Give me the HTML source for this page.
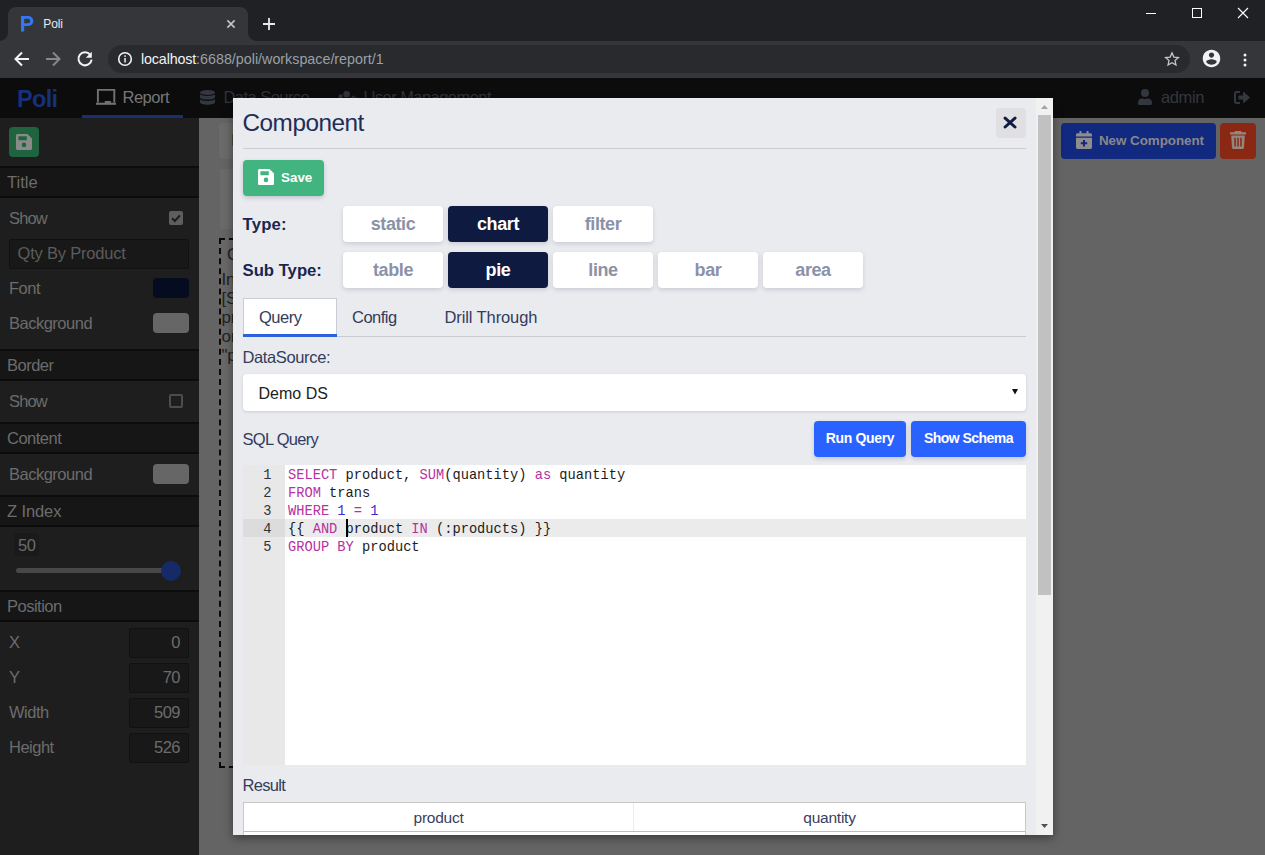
<!DOCTYPE html>
<html>
<head>
<meta charset="utf-8">
<title>Poli</title>
<style>
*{box-sizing:border-box;margin:0;padding:0}
html,body{width:1265px;height:855px;overflow:hidden;background:#666;font-family:"Liberation Sans",sans-serif;}
.abs{position:absolute}
#root{position:relative;width:1265px;height:855px;overflow:hidden;background:#656565}
/* ---------- browser chrome ---------- */
#tabstrip{left:0;top:0;width:1265px;height:41px;background:#202124}
#tab{left:7.5px;top:7px;width:240px;height:34px;background:#35363a;border-radius:8px 8px 0 0}
#toolbar{left:0;top:41px;width:1265px;height:37px;background:#35363a}
#omni{left:108px;top:45px;width:1082px;height:28px;border-radius:14px;background:#282a2d}
.t{position:absolute;white-space:nowrap;line-height:1}
/* ---------- app ---------- */
#nav{left:0;top:78px;width:1265px;height:40px;background:#0c0c0c}
#side{left:0;top:118px;width:199px;height:737px;background:#1e1e1e}
.sech{position:absolute;left:0;width:199px;height:32px;background:#161616;border-top:2px solid #0c0c0c;border-bottom:2px solid #0c0c0c}
.lbl{position:absolute;color:#6c6c6c;font-size:16.5px;letter-spacing:-0.5px;white-space:nowrap;line-height:1}
.inp{position:absolute;background:#181818;border:1px solid #111;border-radius:2px}
/* ---------- modal ---------- */
#modal{left:233px;top:98px;width:820px;height:737px;background:#eaebef;overflow:hidden;box-shadow:0 3px 9px rgba(0,0,0,.42)}
.btn{position:absolute;background:#fff;border-radius:4px;box-shadow:0 2px 4px rgba(60,70,100,.18);color:#8b92a8;font-weight:bold;font-size:18px;letter-spacing:-0.4px;text-align:center;line-height:36.4px;height:36px;width:100px}
.btn.on{background:#0e1a40;color:#fff}
.h{position:absolute;color:#1a2650;white-space:nowrap;line-height:1}

.tb{font-size:16.5px;letter-spacing:-0.5px;color:#323c5c}
.bb{background:#2a62ff;border-radius:4px;color:#fff;font-weight:bold;font-size:14px;letter-spacing:-0.35px;text-align:center;line-height:34px;box-shadow:0 2px 4px rgba(60,70,100,.22);white-space:nowrap}
.code{font-family:"Liberation Mono",monospace;font-size:15px;line-height:18px;white-space:pre;transform-origin:0 0;transform:scaleX(0.9133)}
.k{color:#b730a2}.n{color:#3e2ad0}
.rs{text-align:center;font-size:15.5px;color:#3a4060;letter-spacing:-0.25px}
</style>
</head>
<body>
<div id="root">
<!-- CHROME -->
<div id="tabstrip" class="abs"></div>
<div id="tab" class="abs"></div>
<div class="abs" style="left:-0.5px;top:33px;width:8px;height:8px;background:radial-gradient(circle at 0 0,#202124 7.5px,#35363a 8px)"></div>
<div class="abs" style="left:247.5px;top:33px;width:8px;height:8px;background:radial-gradient(circle at 100% 0,#202124 7.5px,#35363a 8px)"></div>
<div id="toolbar" class="abs"></div>
<div id="omni" class="abs"></div>
<svg class="abs" style="left:20.8px;top:16.2px" width="13" height="16" viewBox="0 0 13 16"><path fill="#3577f2" fill-rule="evenodd" d="M0 0H7.3A5 5 0 0 1 7.3 10H3.2V15.4H0zM3.2 2.8V7.2H7A2.2 2.2 0 0 0 7 2.8z"/></svg>
<div class="t" style="left:43.3px;top:18px;font-size:12px;color:#e8eaed;letter-spacing:-0.15px">Poli</div>
<svg class="abs" style="left:226px;top:19px" width="10" height="10" viewBox="0 0 10 10"><path d="M1.4 1.4L8.6 8.6M8.6 1.4L1.4 8.6" stroke="#c4c7cb" stroke-width="1.5" fill="none"/></svg>
<svg class="abs" style="left:262px;top:17px" width="14" height="14" viewBox="0 0 14 14"><path d="M7 1V13M1 7H13" stroke="#e8eaed" stroke-width="1.8" fill="none"/></svg>
<!-- window controls -->
<svg class="abs" style="left:1145px;top:8px" width="12" height="12" viewBox="0 0 12 12"><path d="M1 5.5H11" stroke="#fff" stroke-width="1" fill="none"/></svg>
<svg class="abs" style="left:1191px;top:7px" width="12" height="12" viewBox="0 0 12 12"><rect x="1.5" y="1.5" width="9" height="9" stroke="#fff" stroke-width="1" fill="none"/></svg>
<svg class="abs" style="left:1237px;top:7px" width="12" height="12" viewBox="0 0 12 12"><path d="M1 1L11 11M11 1L1 11" stroke="#fff" stroke-width="1.1" fill="none"/></svg>
<!-- nav buttons -->
<svg class="abs" style="left:13.5px;top:51px" width="16" height="16" viewBox="0 0 16 16"><path d="M15 8H2.5M8 1.5L1.5 8L8 14.5" stroke="#f1f3f4" stroke-width="2" fill="none"/></svg>
<svg class="abs" style="left:45px;top:51px" width="16" height="16" viewBox="0 0 16 16"><path d="M1 8H13.5M8 1.5L14.5 8L8 14.5" stroke="#85888c" stroke-width="2" fill="none"/></svg>
<svg class="abs" style="left:76px;top:50px" width="18" height="18" viewBox="0 0 18 18"><path d="M14.2 4.6A6.6 6.6 0 1 0 15.6 9.6" stroke="#f1f3f4" stroke-width="2" fill="none"/><path d="M15.8 1.8V7.8H9.8Z" fill="#f1f3f4"/></svg>
<svg class="abs" style="left:117px;top:51px" width="16" height="16" viewBox="0 0 16 16"><circle cx="8" cy="8" r="6.3" stroke="#f1f3f4" stroke-width="1.6" fill="none"/><rect x="7.3" y="7" width="1.5" height="4.5" fill="#f1f3f4"/><rect x="7.3" y="4.3" width="1.5" height="1.6" fill="#f1f3f4"/></svg>
<div class="t" style="left:141px;top:52px;font-size:14.3px;color:#9aa0a6"><span style="color:#f1f3f4;letter-spacing:-0.15px">localhost</span>:6688/poli/workspace/report/1</div>
<svg class="abs" style="left:1163px;top:50px" width="18" height="18" viewBox="0 0 24 24"><path d="M12 3.8l2.5 5.6 6.1.6-4.6 4.1 1.3 6-5.3-3.1-5.3 3.1 1.3-6-4.6-4.1 6.1-.6z" stroke="#c4c7cb" stroke-width="1.7" fill="none" stroke-linejoin="miter"/></svg>
<svg class="abs" style="left:1201.2px;top:48.1px" width="21" height="21" viewBox="0 0 24 24"><path fill="#f1f3f4" d="M12 2C6.48 2 2 6.48 2 12s4.48 10 10 10 10-4.48 10-10S17.52 2 12 2zm0 3c1.66 0 3 1.34 3 3s-1.34 3-3 3-3-1.34-3-3 1.34-3 3-3zm0 14.2c-2.5 0-4.71-1.28-6-3.22.03-1.99 4-3.08 6-3.08 1.99 0 5.97 1.09 6 3.08-1.29 1.94-3.5 3.22-6 3.22z"/></svg>
<svg class="abs" style="left:1241.6px;top:51.5px" width="6" height="16" viewBox="0 0 6 16"><circle cx="3" cy="3" r="1.5" fill="#f1f3f4"/><circle cx="3" cy="8" r="1.5" fill="#f1f3f4"/><circle cx="3" cy="13" r="1.5" fill="#f1f3f4"/></svg>
<!-- APP -->
<div id="nav" class="abs"></div>
<div class="t" style="left:17px;top:87.5px;font-size:23.5px;font-weight:bold;color:#17307a;letter-spacing:-0.7px">Poli</div>
<svg class="abs" style="left:95px;top:88px" width="22" height="18" viewBox="0 0 22 18"><path d="M2.9 14.5V1.9H19.3V14.5" stroke="#727272" stroke-width="1.9" fill="none"/><rect x="1" y="14.7" width="20" height="2.1" fill="#727272"/><rect x="9.8" y="13" width="6" height="2" fill="#727272"/></svg>
<div class="t" style="left:122.5px;top:88.5px;font-size:16.5px;color:#777;letter-spacing:-0.5px">Report</div>
<div class="abs" style="left:82px;top:114.5px;width:101px;height:3.5px;background:#18306f"></div>
<svg class="abs" style="left:199.5px;top:89.5px" width="15" height="15.3" viewBox="0 0 15 16" preserveAspectRatio="none"><g fill="#33373f"><ellipse cx="7.5" cy="2.6" rx="7.5" ry="2.6"/><path d="M0 4.3c1.2 1.5 4.2 2 7.5 2s6.3-.5 7.5-2v3.2c0 1.4-3.4 2.5-7.5 2.5S0 8.9 0 7.5z"/><path d="M0 9.4c1.2 1.5 4.2 2 7.5 2s6.3-.5 7.5-2v3.5c0 1.5-3.4 2.6-7.5 2.6S0 14.4 0 12.9z"/></g></svg>
<div class="t" style="left:223.5px;top:88.5px;font-size:16.5px;color:#2f333b;letter-spacing:-0.55px">Data Source</div>
<svg class="abs" style="left:338px;top:90.5px" width="20" height="16" viewBox="0 0 20 16"><g fill="#2f333b"><circle cx="8.6" cy="3.3" r="3.3"/><circle cx="2.6" cy="5.4" r="2.1"/><path d="M0 13C0 10 1.5 8.5 3.8 8.5H5C3.8 9.7 3.5 11 3.5 13z"/><path d="M4 14.5C4 10.5 5.8 8.2 8.6 8.2s3 .8 3.5 1.5c-.6 1.5-.6 3 .3 4.8z"/><circle cx="15.5" cy="10" r="3.8"/><path d="M14.5 4.8h2l.4 1.6h-2.8zM11 7.5l1.4-1.4 1.4 1zM20 7.5l-1.4-1.4-1.4 1z"/></g></svg>
<div class="t" style="left:363.5px;top:88.5px;font-size:16.5px;color:#2f333b;letter-spacing:-0.55px">User Management</div>
<svg class="abs" style="left:1138px;top:89px" width="14" height="16" viewBox="0 0 14 16"><g fill="#33373f"><circle cx="7" cy="4" r="4"/><path d="M1.5 16C.6 16 0 15.4 0 14.5v-.8C0 11 1.8 9.6 4.2 9.6c.9 0 1.6.5 2.8.5s1.9-.5 2.8-.5c2.4 0 4.2 1.4 4.2 4.1v.8c0 .9-.6 1.5-1.5 1.5z"/></g></svg>
<div class="t" style="left:1161px;top:88.5px;font-size:16.5px;color:#33373f;letter-spacing:-0.4px">admin</div>
<svg class="abs" style="left:1234px;top:91px" width="16" height="13" viewBox="0 0 16 13"><g fill="#33373f"><path d="M6 0H2.4C1 0 0 1 0 2.4v8.2C0 12 1 13 2.4 13H6v-2H2.6C2.2 11 2 10.8 2 10.4V2.6C2 2.2 2.2 2 2.6 2H6z"/><path d="M10.2 1.2L16 6.5l-5.8 5.3c-.5.4-1.2.1-1.2-.6V8.5H5.2c-.4 0-.7-.3-.7-.7V5.2c0-.4.3-.7.7-.7H9V1.8c0-.7.7-1 1.2-.6z"/></g></svg>
<div class="abs" style="left:199px;top:118px;width:1066px;height:737px;background:#646464"></div>
<div id="side" class="abs"></div>
<!-- sidebar save -->
<div class="abs" style="left:9px;top:127px;width:30px;height:30px;border-radius:4px;background:#20633f"></div>
<svg class="abs" style="left:16px;top:134px" width="16" height="16" viewBox="0 0 16 16"><path fill="#8a8a8a" fill-rule="evenodd" d="M1.6 0H11.5L16 4.5V14.4C16 15.3 15.3 16 14.4 16H1.6C.7 16 0 15.3 0 14.4V1.6C0 .7.7 0 1.6 0zM2.4 2.3V6.2H10.8V2.3zM8 8.6a2.3 2.3 0 1 0 0 4.6a2.3 2.3 0 0 0 0-4.6z"/></svg>
<!-- sections -->
<div class="sech" style="top:166px"></div><div class="lbl" style="left:7px;top:173.5px;letter-spacing:0">Title</div>
<div class="lbl" style="left:9px;top:209.5px;letter-spacing:-0.85px">Show</div>
<div class="abs" style="left:169px;top:211px;width:14px;height:14px;border-radius:2px;background:#5e5e5e"></div>
<svg class="abs" style="left:169px;top:211px" width="14" height="14" viewBox="0 0 14 14"><path d="M3 7.3L5.8 10L11 4.3" stroke="#1c1c1c" stroke-width="2" fill="none"/></svg>
<div class="inp" style="left:9px;top:239px;width:180px;height:30px"></div>
<div class="lbl" style="left:17.5px;top:244.5px;color:#5c5c5c;letter-spacing:-0.2px">Qty By Product</div>
<div class="lbl" style="left:9px;top:279.5px">Font</div>
<div class="abs" style="left:153px;top:278px;width:36px;height:20px;border-radius:4px;background:#050c1f"></div>
<div class="lbl" style="left:9px;top:314.5px">Background</div>
<div class="abs" style="left:153px;top:313px;width:36px;height:20px;border-radius:4px;background:#666"></div>
<div class="sech" style="top:349px"></div><div class="lbl" style="left:7px;top:356.5px">Border</div>
<div class="lbl" style="left:9px;top:392.5px;letter-spacing:-0.85px">Show</div>
<div class="abs" style="left:169px;top:394px;width:14px;height:14px;border-radius:2px;border:2px solid #4c4c4c"></div>
<div class="sech" style="top:422px"></div><div class="lbl" style="left:7px;top:429.5px">Content</div>
<div class="lbl" style="left:9px;top:465.5px">Background</div>
<div class="abs" style="left:153px;top:464px;width:36px;height:20px;border-radius:4px;background:#666"></div>
<div class="sech" style="top:495px"></div><div class="lbl" style="left:7px;top:502.5px;letter-spacing:-0.1px">Z Index</div>
<div class="abs" style="left:14px;top:533px;width:25px;height:23px;border-radius:3px;background:#1a1a1a"></div>
<div class="lbl" style="left:18px;top:537px">50</div>
<div class="abs" style="left:16px;top:568px;width:160px;height:5px;border-radius:3px;background:#484848"></div>
<div class="abs" style="left:161px;top:561px;width:20px;height:20px;border-radius:10px;background:#152a66"></div>
<div class="sech" style="top:590px"></div><div class="lbl" style="left:7px;top:597.5px">Position</div>
<div class="lbl" style="left:9px;top:634px">X</div><div class="inp" style="left:129px;top:628px;width:60px;height:30px"></div><div class="lbl" style="right:1085px;top:634px">0</div>
<div class="lbl" style="left:9px;top:669px">Y</div><div class="inp" style="left:129px;top:663px;width:60px;height:30px"></div><div class="lbl" style="right:1085px;top:669px">70</div>
<div class="lbl" style="left:9px;top:704px">Width</div><div class="inp" style="left:129px;top:698px;width:60px;height:30px"></div><div class="lbl" style="right:1085px;top:704px">509</div>
<div class="lbl" style="left:9px;top:739px">Height</div><div class="inp" style="left:129px;top:733px;width:60px;height:30px"></div><div class="lbl" style="right:1085px;top:739px">526</div>
<!-- canvas -->
<div class="abs" style="left:219px;top:123px;width:40px;height:36px;border-radius:4px;background:#6a6a6a"></div><div class="abs" style="left:231.5px;top:134px;width:2px;height:12px;background:#4d4a38"></div>
<div class="abs" style="left:220px;top:169px;width:400px;height:60px;border-radius:2px;background:#6a6a6a"></div>
<div class="abs" style="left:219px;top:238px;width:511px;height:530px;background:#686868;border:2px dashed #0a0a0a"></div>
<div class="t" style="left:227px;top:246px;font-size:17px;color:#1c1c1c">Q</div>
<div class="t" style="left:221.5px;top:270.3px;font-size:17px;line-height:19px;color:#222;white-space:pre;letter-spacing:-0.3px">In
[S
pr
or
"p</div>
<div class="abs" style="left:1061px;top:123px;width:155px;height:36px;border-radius:4px;background:#11297f"></div>
<svg class="abs" style="left:1076px;top:131px" width="16" height="18" viewBox="0 0 16 18"><path fill="#8d8d8d" fill-rule="evenodd" d="M3.5 0h2v2.2h5V0h2v2.2h2c.8 0 1.5.7 1.5 1.5V5.5H0V3.7c0-.8.7-1.5 1.5-1.5h2zM0 6.7h16v9.8c0 .8-.7 1.5-1.5 1.5h-13C.7 18 0 17.3 0 16.5zM7 9v2.2H4.8v2H7v2.2h2v-2.2h2.2v-2H9V9z"/></svg>
<div class="t" style="left:1099px;top:134px;font-size:13.4px;font-weight:bold;color:#888;letter-spacing:-0.05px">New Component</div>
<div class="abs" style="left:1220px;top:123px;width:36px;height:36px;border-radius:4px;background:#8a2813"></div>
<svg class="abs" style="left:1230px;top:131px" width="16" height="18" viewBox="0 0 16 18"><path fill="#94867f" fill-rule="evenodd" d="M5.2 0h5.6l1 1.2H16V3.4H0V1.2h4.2zM1.2 4.6h13.6l-.8 11.9c-.1.8-.7 1.5-1.6 1.5H3.6c-.9 0-1.5-.7-1.6-1.5zM4.3 6.8v8.6h1.5V6.8zM7.25 6.8v8.6h1.5V6.8zM10.2 6.8v8.6h1.5V6.8z"/></svg>
<!-- MODAL -->
<div id="modal" class="abs"></div>
<div class="h" style="left:242.5px;top:111px;font-size:24.3px;letter-spacing:-0.47px;color:#222d56">Component</div>
<div class="abs" style="left:996px;top:108px;width:30px;height:30px;border-radius:4px;background:#e0e0e3"></div>
<svg class="abs" style="left:1003.4px;top:116.4px" width="14" height="13" viewBox="0 0 14 13"><path d="M2.1 2.1L12 11M12 2.1L2.1 11" stroke="#0f1c44" stroke-width="3" stroke-linecap="round" fill="none"/></svg>
<div class="abs" style="left:243px;top:148px;width:783px;height:1px;background:#cccdd2"></div>
<!-- save -->
<div class="abs" style="left:243px;top:160px;width:81px;height:36px;border-radius:4px;background:#42b480;box-shadow:0 2px 4px rgba(60,70,100,.22)"></div>
<svg class="abs" style="left:258px;top:169px" width="16" height="16" viewBox="0 0 16 16"><path fill="#fff" fill-rule="evenodd" d="M1.6 0H11.5L16 4.5V14.4C16 15.3 15.3 16 14.4 16H1.6C.7 16 0 15.3 0 14.4V1.6C0 .7.7 0 1.6 0zM2.4 2.3V6.2H10.8V2.3zM8 8.6a2.3 2.3 0 1 0 0 4.6a2.3 2.3 0 0 0 0-4.6z"/></svg>
<div class="t" style="left:281px;top:170.5px;font-size:13.4px;font-weight:bold;color:#fff">Save</div>
<!-- type rows -->
<div class="h" style="left:242.5px;top:216.5px;font-size:16.7px;font-weight:bold;letter-spacing:0.2px">Type:</div>
<div class="btn" style="left:343px;top:206px">static</div>
<div class="btn on" style="left:448px;top:206px">chart</div>
<div class="btn" style="left:553px;top:206px">filter</div>
<div class="h" style="left:242.5px;top:262.5px;font-size:16.7px;font-weight:bold">Sub Type:</div>
<div class="btn" style="left:343px;top:252px">table</div>
<div class="btn on" style="left:448px;top:252px">pie</div>
<div class="btn" style="left:553px;top:252px">line</div>
<div class="btn" style="left:658px;top:252px">bar</div>
<div class="btn" style="left:763px;top:252px">area</div>
<!-- tabs -->
<div class="abs" style="left:243px;top:336px;width:783px;height:1px;background:#c9cad0"></div>
<div class="abs" style="left:243px;top:298px;width:94px;height:39px;background:#fff;border:1px solid #c9ccd4;border-bottom:none"></div>
<div class="abs" style="left:243px;top:333.5px;width:94px;height:3.5px;background:#2b60de"></div>
<div class="h tb" style="left:259px;top:309px">Query</div>
<div class="h tb" style="left:352px;top:309px">Config</div>
<div class="h tb" style="left:444.5px;top:309px;letter-spacing:-0.1px">Drill Through</div>
<!-- datasource -->
<div class="h tb" style="left:242.5px;top:349px;letter-spacing:-0.37px">DataSource:</div>
<div class="abs" style="left:243px;top:374px;width:783px;height:37px;border-radius:4px;background:#fff;box-shadow:0 1px 3px rgba(60,70,100,.18)"></div>
<div class="t" style="left:258.5px;top:385.5px;font-size:16px;color:#1d1d1d">Demo DS</div>
<svg class="abs" style="left:1012px;top:389.3px" width="6" height="5.5" viewBox="0 0 6 5.5"><path d="M0 0H6L3 5.5z" fill="#111"/></svg>
<!-- sql query -->
<div class="h tb" style="left:242.5px;top:431px;letter-spacing:-0.7px">SQL Query</div>
<div class="abs bb" style="left:814px;top:421px;width:92px;height:35.5px">Run Query</div>
<div class="abs bb" style="left:911px;top:421px;width:115px;height:35.5px;letter-spacing:-0.55px">Show Schema</div>
<!-- editor -->
<div class="abs" style="left:243px;top:465px;width:783px;height:300px;background:#fff"></div>
<div class="abs" style="left:243px;top:465px;width:42px;height:300px;background:#e8e8e8"></div>
<div class="abs" style="left:285px;top:519px;width:741px;height:18px;background:#ebebeb"></div>
<div class="abs" style="left:243px;top:519px;width:42px;height:18px;background:#dcdcdc"></div>
<pre class="abs code" style="left:243px;top:467.3px;width:28.6px;text-align:right;color:#333;transform-origin:100% 0">1
2
3
4
5</pre>
<pre class="abs code" style="left:288.2px;top:467.3px;color:#1c1c1c"><span class="k">SELECT</span> product, <span class="k">SUM</span>(quantity) <span class="k">as</span> quantity
<span class="k">FROM</span> trans
<span class="k">WHERE</span> <span class="n">1</span> <span class="k">=</span> <span class="n">1</span>
{{ <span class="k">AND</span> product <span class="k">IN</span> (:products) }}
<span class="k">GROUP</span> <span class="k">BY</span> product</pre>
<div class="abs" style="left:346.4px;top:519px;width:2px;height:17.5px;background:#000"></div>
<!-- result -->
<div class="h tb" style="left:242.5px;top:777px;letter-spacing:-0.7px">Result</div>
<div class="abs" style="left:243px;top:802px;width:783px;height:33px;background:#fff;border:1px solid #c8c8c8;border-bottom:none"></div>
<div class="abs" style="left:633px;top:803px;width:1px;height:28px;background:#ececec"></div>
<div class="abs" style="left:244px;top:831px;width:781px;height:1px;background:#bdbdbd"></div>
<div class="t rs" style="left:244px;width:389px;top:810px">product</div>
<div class="t rs" style="left:634px;width:391px;top:810px">quantity</div>
<!-- modal scrollbar -->
<div class="abs" style="left:1036px;top:98px;width:17px;height:737px;background:#f1f1f1"></div>
<div class="abs" style="left:1038px;top:115px;width:13px;height:479.5px;background:#c1c1c1"></div>
<svg class="abs" style="left:1041px;top:104.8px" width="7" height="4" viewBox="0 0 7 4"><path d="M0 4L3.5 0L7 4z" fill="#a3a3a3"/></svg>
<svg class="abs" style="left:1041px;top:824.2px" width="7" height="4" viewBox="0 0 7 4"><path d="M0 0L3.5 4L7 0z" fill="#505050"/></svg>
</div>
</body>
</html>
